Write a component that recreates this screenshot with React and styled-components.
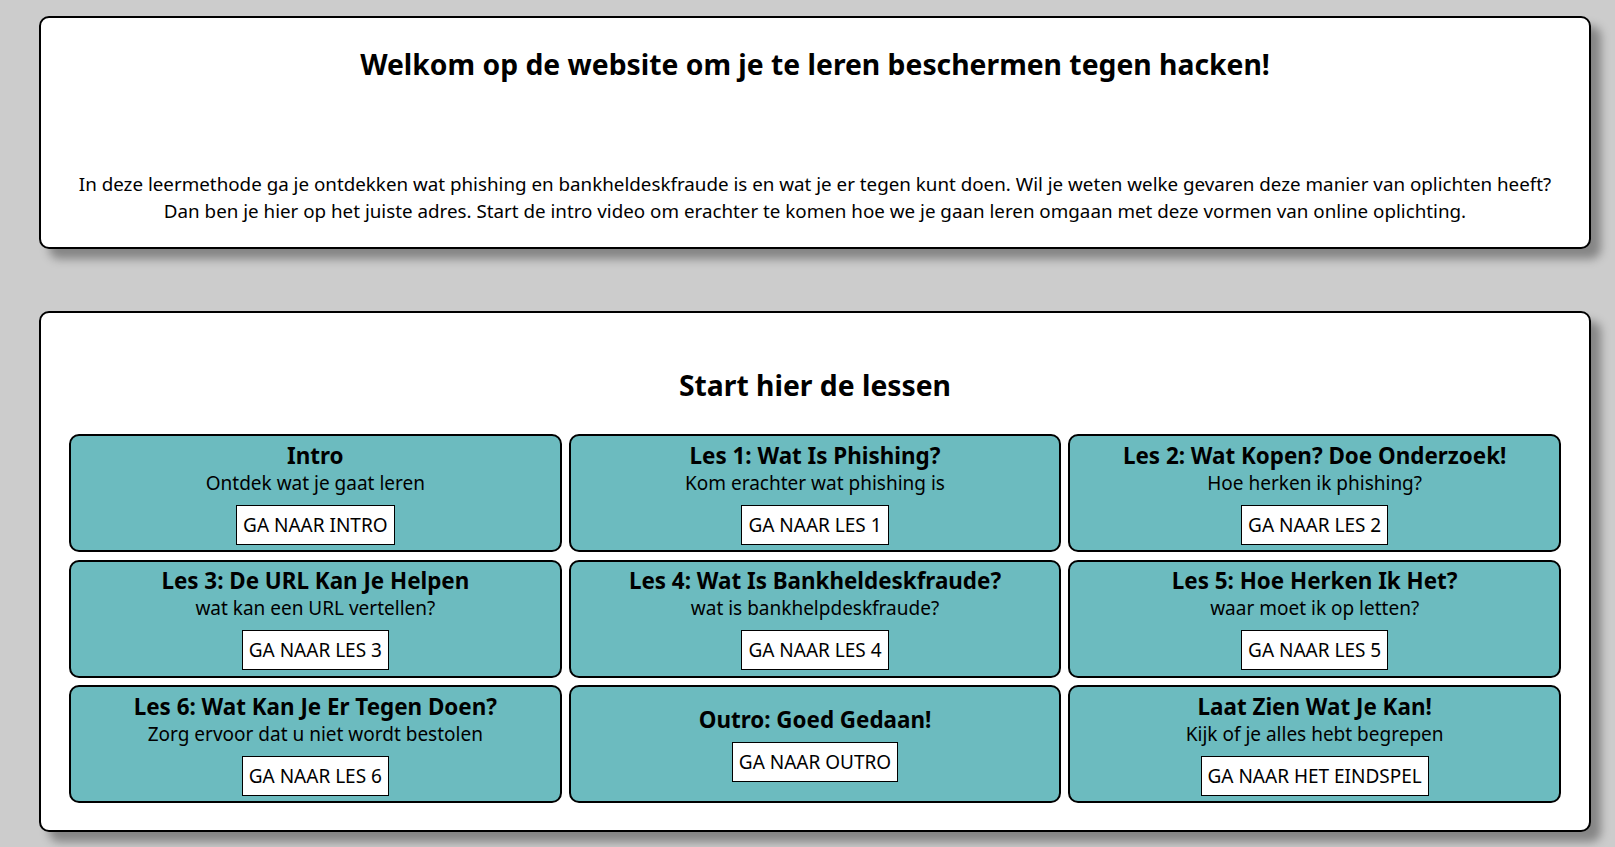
import React from 'react';
import styled, { createGlobalStyle } from 'styled-components';

const GlobalStyle = createGlobalStyle`
    body {
        margin: 0;
        background-color: #cccccc;
        font-family: 'Noto Sans', 'Open Sans', sans-serif;
        color: #000;
    }
`;

const Page = styled.div`
    display: flex;
    flex-direction: column;
    gap: 62px;
    padding: 16px 24px 16px 39px;
`;

const Card = styled.section`
    background-color: #fff;
    border: 2px solid #000;
    border-radius: 10px;
    box-shadow: 10px 10px 10px rgba(0, 0, 0, 0.35);
    padding: ${({pad}) => pad};
    text-align: center;
`;

const Title = styled.h1`
    margin: 0;
    font-size: 28.3px;
    line-height: 34px;
    font-weight: 700;
`;

const Intro = styled.p`
    margin: 90px 0 0;
    font-size: 18.8px;
    line-height: 27px;
`;

const Grid = styled.div`
    display: grid;
    grid-template-columns: repeat(3, 1fr);
    grid-auto-rows: 118px;
    gap: 7.5px 7px;
    margin-top: 32px;
`;

const Tile = styled.div`
    display: flex;
    flex-direction: column;
    align-items: center;
    justify-content: center;
    background-color: #6cbbbf;
    border: 2px solid #000;
    border-radius: 10px;
`;

const TileTitle = styled.div`
    font-size: 22.4px;
    line-height: 28px;
    font-weight: 700;
`;

const TileText = styled.div`
    font-size: 19px;
    line-height: 27px;
`;

const Button = styled.a`
    display: inline-block;
    margin-top: 8px;
    padding: 6px 6px;
    background-color: #fff;
    border: 1px solid #000;
    font-size: 19px;
    line-height: 26px;
    color: #000;
    text-decoration: none;
    cursor: pointer;
`;

const lessons = [
    { title: 'Intro', text: 'Ontdek wat je gaat leren', button: 'GA NAAR INTRO' },
    { title: 'Les 1: Wat Is Phishing?', text: 'Kom erachter wat phishing is', button: 'GA NAAR LES 1' },
    { title: 'Les 2: Wat Kopen? Doe Onderzoek!', text: 'Hoe herken ik phishing?', button: 'GA NAAR LES 2' },
    { title: 'Les 3: De URL Kan Je Helpen', text: 'wat kan een URL vertellen?', button: 'GA NAAR LES 3' },
    { title: 'Les 4: Wat Is Bankheldeskfraude?', text: 'wat is bankhelpdeskfraude?', button: 'GA NAAR LES 4' },
    { title: 'Les 5: Hoe Herken Ik Het?', text: 'waar moet ik op letten?', button: 'GA NAAR LES 5' },
    { title: 'Les 6: Wat Kan Je Er Tegen Doen?', text: 'Zorg ervoor dat u niet wordt bestolen', button: 'GA NAAR LES 6' },
    { title: 'Outro: Goed Gedaan!', button: 'GA NAAR OUTRO' },
    { title: 'Laat Zien Wat Je Kan!', text: 'Kijk of je alles hebt begrepen', button: 'GA NAAR HET EINDSPEL' },
];

export default function App() {
    return (
        <>
            <GlobalStyle />
            <Page>
                <Card pad="29px 20px 22px">
                    <Title>Welkom op de website om je te leren beschermen tegen hacken!</Title>
                    <Intro>
                        In deze leermethode ga je ontdekken wat phishing en bankheldeskfraude is en wat je er tegen kunt doen. Wil je weten welke gevaren deze manier van oplichten heeft?
                        <br />
                        Dan ben je hier op het juiste adres. Start de intro video om erachter te komen hoe we je gaan leren omgaan met deze vormen van online oplichting.
                    </Intro>
                </Card>
                <Card pad="55px 28px 27px">
                    <Title>Start hier de lessen</Title>
                    <Grid>
                        {lessons.map(lesson => (
                            <Tile key={lesson.button}>
                                <TileTitle>{lesson.title}</TileTitle>
                                {lesson.text && <TileText>{lesson.text}</TileText>}
                                <Button>{lesson.button}</Button>
                            </Tile>
                        ))}
                    </Grid>
                </Card>
            </Page>
        </>
    );
}
